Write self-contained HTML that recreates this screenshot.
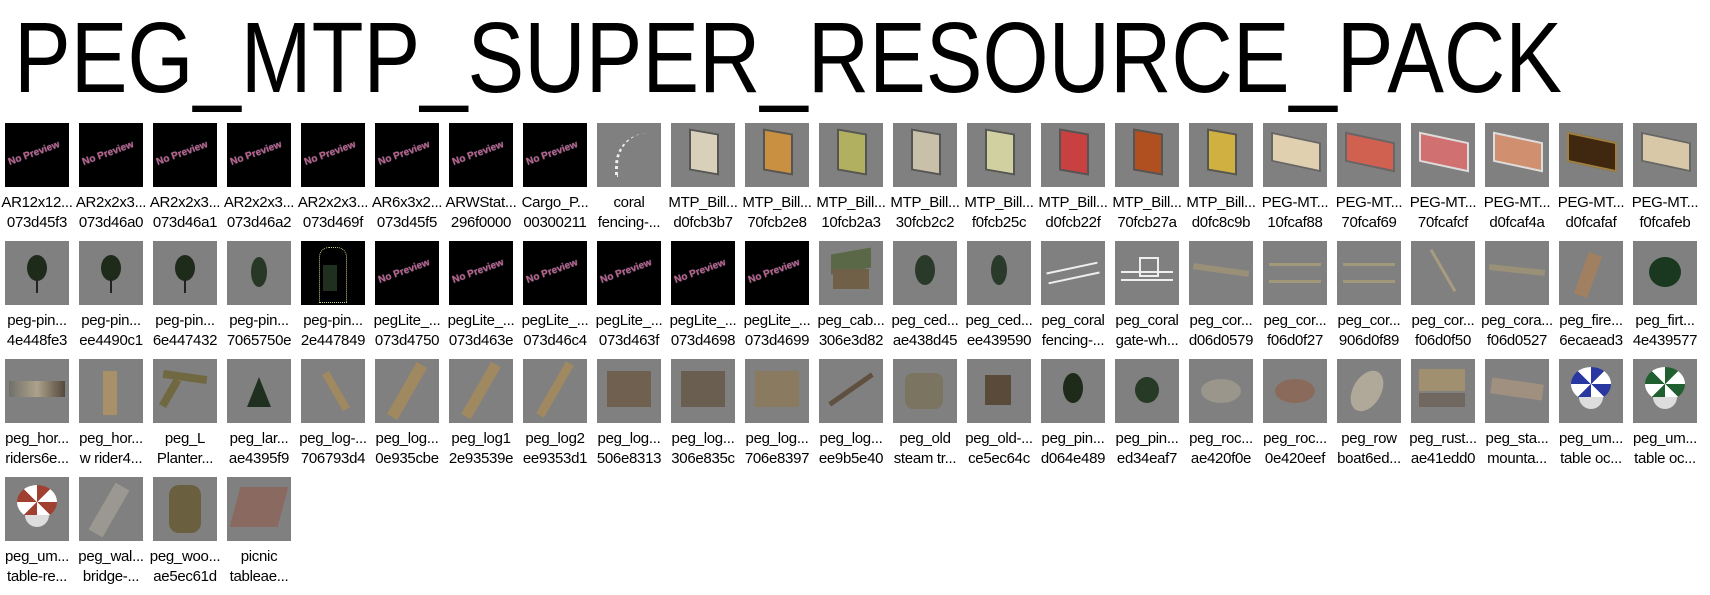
<!DOCTYPE html>
<html><head><meta charset="utf-8"><style>
html,body{margin:0;padding:0;background:#fff;width:1710px;height:589px;overflow:hidden}
h1{position:absolute;left:0;top:0;margin:0}
.g{position:absolute;left:0;top:123px;width:1710px}
.c{position:absolute;width:74px;height:118px}
.t{position:absolute;left:5px;top:0;width:64px;height:64px;background:#808080;overflow:hidden}
.np{background:#000}
.np::after{content:"No Preview";position:absolute;left:2px;top:24px;width:60px;font:bold 10px "Liberation Sans",sans-serif;color:#c06080;transform:rotate(-20deg);text-shadow:0 0 1px #7080c0;white-space:nowrap}
.l{position:absolute;left:-4px;top:70px;width:82px;text-align:center;font:15px/20px "Liberation Sans",sans-serif;color:#000;letter-spacing:-0.3px;white-space:nowrap}
.s{position:absolute}
</style></head><body>
<svg style="position:absolute;left:0;top:0" width="1710" height="120"><text x="14" y="92" font-family="Liberation Sans, sans-serif" font-size="100" textLength="1548" lengthAdjust="spacingAndGlyphs">PEG_MTP_SUPER_RESOURCE_PACK</text></svg>
<div class="g">
<!-- row 1 -->
<div class="c" style="left:0;top:0"><div class="t np"></div><div class="l">AR12x12...<br>073d45f3</div></div>
<div class="c" style="left:74px;top:0"><div class="t np"></div><div class="l">AR2x2x3...<br>073d46a0</div></div>
<div class="c" style="left:148px;top:0"><div class="t np"></div><div class="l">AR2x2x3...<br>073d46a1</div></div>
<div class="c" style="left:222px;top:0"><div class="t np"></div><div class="l">AR2x2x3...<br>073d46a2</div></div>
<div class="c" style="left:296px;top:0"><div class="t np"></div><div class="l">AR2x2x3...<br>073d469f</div></div>
<div class="c" style="left:370px;top:0"><div class="t np"></div><div class="l">AR6x3x2...<br>073d45f5</div></div>
<div class="c" style="left:444px;top:0"><div class="t np"></div><div class="l">ARWStat...<br>296f0000</div></div>
<div class="c" style="left:518px;top:0"><div class="t np"></div><div class="l">Cargo_P...<br>00300211</div></div>
<div class="c" style="left:592px;top:0"><div class="t"><div class="s" style="left:18px;top:10px;width:30px;height:44px;border-left:3px dotted #eee;border-radius:40px 0 0 0"></div></div><div class="l">coral<br>fencing-...</div></div>
<div class="c" style="left:666px;top:0"><div class="t"><div class="s" style="left:18px;top:8px;width:26px;height:38px;background:#d8d0b8;border:2px solid #555;transform:skewY(10deg)"></div></div><div class="l">MTP_Bill...<br>d0fcb3b7</div></div>
<div class="c" style="left:740px;top:0"><div class="t"><div class="s" style="left:18px;top:8px;width:26px;height:38px;background:#c89040;border:2px solid #555;transform:skewY(10deg)"></div></div><div class="l">MTP_Bill...<br>70fcb2e8</div></div>
<div class="c" style="left:814px;top:0"><div class="t"><div class="s" style="left:18px;top:8px;width:26px;height:38px;background:#b0b060;border:2px solid #555;transform:skewY(10deg)"></div></div><div class="l">MTP_Bill...<br>10fcb2a3</div></div>
<div class="c" style="left:888px;top:0"><div class="t"><div class="s" style="left:18px;top:8px;width:26px;height:38px;background:#c8c0a8;border:2px solid #555;transform:skewY(10deg)"></div></div><div class="l">MTP_Bill...<br>30fcb2c2</div></div>
<div class="c" style="left:962px;top:0"><div class="t"><div class="s" style="left:18px;top:8px;width:26px;height:38px;background:#d0d0a0;border:2px solid #555;transform:skewY(10deg)"></div></div><div class="l">MTP_Bill...<br>f0fcb25c</div></div>
<div class="c" style="left:1036px;top:0"><div class="t"><div class="s" style="left:18px;top:8px;width:26px;height:38px;background:#c84040;border:2px solid #555;transform:skewY(10deg)"></div></div><div class="l">MTP_Bill...<br>d0fcb22f</div></div>
<div class="c" style="left:1110px;top:0"><div class="t"><div class="s" style="left:18px;top:8px;width:26px;height:38px;background:#b05020;border:2px solid #555;transform:skewY(10deg)"></div></div><div class="l">MTP_Bill...<br>70fcb27a</div></div>
<div class="c" style="left:1184px;top:0"><div class="t"><div class="s" style="left:18px;top:8px;width:26px;height:38px;background:#d0b040;border:2px solid #555;transform:skewY(10deg)"></div></div><div class="l">MTP_Bill...<br>d0fc8c9b</div></div>
<div class="c" style="left:1258px;top:0"><div class="t"><div class="s" style="left:8px;top:14px;width:46px;height:26px;background:#e0d0b0;border:2px solid #666;transform:skewY(12deg)"></div></div><div class="l">PEG-MT...<br>10fcaf88</div></div>
<div class="c" style="left:1332px;top:0"><div class="t"><div class="s" style="left:8px;top:14px;width:46px;height:26px;background:#d06050;border:2px solid #666;transform:skewY(12deg)"></div></div><div class="l">PEG-MT...<br>70fcaf69</div></div>
<div class="c" style="left:1406px;top:0"><div class="t"><div class="s" style="left:8px;top:14px;width:46px;height:26px;background:#d07070;border:2px solid #ddd;transform:skewY(12deg)"></div></div><div class="l">PEG-MT...<br>70fcafcf</div></div>
<div class="c" style="left:1480px;top:0"><div class="t"><div class="s" style="left:8px;top:14px;width:46px;height:26px;background:#d09070;border:2px solid #ddd;transform:skewY(12deg)"></div></div><div class="l">PEG-MT...<br>d0fcaf4a</div></div>
<div class="c" style="left:1554px;top:0"><div class="t"><div class="s" style="left:8px;top:14px;width:46px;height:26px;background:#402810;border:2px solid #a08040;transform:skewY(12deg)"></div></div><div class="l">PEG-MT...<br>d0fcafaf</div></div>
<div class="c" style="left:1628px;top:0"><div class="t"><div class="s" style="left:8px;top:14px;width:46px;height:26px;background:#d8c8a8;border:2px solid #666;transform:skewY(12deg)"></div></div><div class="l">PEG-MT...<br>f0fcafeb</div></div>
<!-- row 2 -->
<div class="c" style="left:0;top:118px"><div class="t"><div class="s" style="left:22px;top:14px;width:20px;height:26px;background:#1e2a1a;border-radius:50%"></div><div class="s" style="left:31px;top:38px;width:2px;height:14px;background:#222"></div></div><div class="l">peg-pin...<br>4e448fe3</div></div>
<div class="c" style="left:74px;top:118px"><div class="t"><div class="s" style="left:22px;top:14px;width:20px;height:26px;background:#1e2a1a;border-radius:50%"></div><div class="s" style="left:31px;top:38px;width:2px;height:14px;background:#222"></div></div><div class="l">peg-pin...<br>ee4490c1</div></div>
<div class="c" style="left:148px;top:118px"><div class="t"><div class="s" style="left:22px;top:14px;width:20px;height:26px;background:#1e2a1a;border-radius:50%"></div><div class="s" style="left:31px;top:38px;width:2px;height:14px;background:#222"></div></div><div class="l">peg-pin...<br>6e447432</div></div>
<div class="c" style="left:222px;top:118px"><div class="t"><div class="s" style="left:24px;top:16px;width:16px;height:30px;background:#283826;border-radius:50%"></div></div><div class="l">peg-pin...<br>7065750e</div></div>
<div class="c" style="left:296px;top:118px"><div class="t" style="background:#000"><div class="s" style="left:18px;top:6px;width:26px;height:54px;border:1px dotted #cc8;border-radius:10px 10px 0 0"></div><div class="s" style="left:22px;top:24px;width:14px;height:26px;background:#203020"></div></div><div class="l">peg-pin...<br>2e447849</div></div>
<div class="c" style="left:370px;top:118px"><div class="t np"></div><div class="l">pegLite_...<br>073d4750</div></div>
<div class="c" style="left:444px;top:118px"><div class="t np"></div><div class="l">pegLite_...<br>073d463e</div></div>
<div class="c" style="left:518px;top:118px"><div class="t np"></div><div class="l">pegLite_...<br>073d46c4</div></div>
<div class="c" style="left:592px;top:118px"><div class="t np"></div><div class="l">pegLite_...<br>073d463f</div></div>
<div class="c" style="left:666px;top:118px"><div class="t np"></div><div class="l">pegLite_...<br>073d4698</div></div>
<div class="c" style="left:740px;top:118px"><div class="t np"></div><div class="l">pegLite_...<br>073d4699</div></div>
<div class="c" style="left:814px;top:118px"><div class="t"><div class="s" style="left:12px;top:10px;width:40px;height:20px;background:#5a6848;transform:skewY(-10deg)"></div><div class="s" style="left:14px;top:28px;width:36px;height:20px;background:#706048"></div></div><div class="l">peg_cab...<br>306e3d82</div></div>
<div class="c" style="left:888px;top:118px"><div class="t"><div class="s" style="left:22px;top:14px;width:20px;height:30px;background:#2a3a2a;border-radius:50%"></div></div><div class="l">peg_ced...<br>ae438d45</div></div>
<div class="c" style="left:962px;top:118px"><div class="t"><div class="s" style="left:24px;top:14px;width:16px;height:30px;background:#2a3a2a;border-radius:50%"></div></div><div class="l">peg_ced...<br>ee439590</div></div>
<div class="c" style="left:1036px;top:118px"><div class="t"><div class="s" style="left:6px;top:26px;width:52px;height:8px;border-top:2px solid #eee;border-bottom:2px solid #eee;transform:rotate(-12deg)"></div></div><div class="l">peg_coral<br>fencing-...</div></div>
<div class="c" style="left:1110px;top:118px"><div class="t"><div class="s" style="left:6px;top:30px;width:52px;height:6px;border-top:2px solid #eee;border-bottom:2px solid #eee"></div><div class="s" style="left:24px;top:16px;width:16px;height:16px;border:2px solid #eee"></div></div><div class="l">peg_coral<br>gate-wh...</div></div>
<div class="c" style="left:1184px;top:118px"><div class="t"><div class="s" style="left:4px;top:26px;width:56px;height:6px;background:#9a9078;transform:rotate(8deg)"></div></div><div class="l">peg_cor...<br>d06d0579</div></div>
<div class="c" style="left:1258px;top:118px"><div class="t"><div class="s" style="left:6px;top:22px;width:52px;height:14px;border-top:3px solid #a09878;border-bottom:3px solid #a09878"></div></div><div class="l">peg_cor...<br>f06d0f27</div></div>
<div class="c" style="left:1332px;top:118px"><div class="t"><div class="s" style="left:6px;top:22px;width:52px;height:14px;border-top:3px solid #a09878;border-bottom:3px solid #a09878"></div></div><div class="l">peg_cor...<br>906d0f89</div></div>
<div class="c" style="left:1406px;top:118px"><div class="t"><div class="s" style="left:8px;top:28px;width:48px;height:3px;background:#a89c80;transform:rotate(60deg)"></div></div><div class="l">peg_cor...<br>f06d0f50</div></div>
<div class="c" style="left:1480px;top:118px"><div class="t"><div class="s" style="left:4px;top:26px;width:56px;height:6px;background:#9a9078;transform:rotate(6deg)"></div></div><div class="l">peg_cora...<br>f06d0527</div></div>
<div class="c" style="left:1554px;top:118px"><div class="t"><div class="s" style="left:22px;top:12px;width:14px;height:44px;background:#a08060;transform:rotate(20deg)"></div></div><div class="l">peg_fire...<br>6ecaead3</div></div>
<div class="c" style="left:1628px;top:118px"><div class="t"><div class="s" style="left:16px;top:16px;width:32px;height:30px;background:#1a3820;border-radius:50%"></div></div><div class="l">peg_firt...<br>4e439577</div></div>
<!-- row 3 -->
<div class="c" style="left:0;top:236px"><div class="t"><div class="s" style="left:4px;top:22px;width:56px;height:16px;background:linear-gradient(90deg,#6a6a60,#c0b090,#403020);opacity:.7"></div></div><div class="l">peg_hor...<br>riders6e...</div></div>
<div class="c" style="left:74px;top:236px"><div class="t"><div class="s" style="left:24px;top:12px;width:14px;height:44px;background:#a89068"></div></div><div class="l">peg_hor...<br>w rider4...</div></div>
<div class="c" style="left:148px;top:236px"><div class="t"><div class="s" style="left:10px;top:14px;width:44px;height:8px;background:#706840;transform:rotate(8deg)"></div><div class="s" style="left:2px;top:30px;width:30px;height:8px;background:#706840;transform:rotate(-60deg)"></div></div><div class="l">peg_L<br>Planter...</div></div>
<div class="c" style="left:222px;top:236px"><div class="t"><div class="s" style="left:20px;top:18px;width:24px;height:30px;background:#203020;clip-path:polygon(50% 0,100% 100%,0 100%)"></div></div><div class="l">peg_lar...<br>ae4395f9</div></div>
<div class="c" style="left:296px;top:236px"><div class="t"><div class="s" style="left:14px;top:28px;width:42px;height:8px;background:#a08860;transform:rotate(60deg)"></div></div><div class="l">peg_log-...<br>706793d4</div></div>
<div class="c" style="left:370px;top:236px"><div class="t"><div class="s" style="left:2px;top:26px;width:60px;height:12px;background:#a08860;transform:rotate(-60deg)"></div></div><div class="l">peg_log...<br>0e935cbe</div></div>
<div class="c" style="left:444px;top:236px"><div class="t"><div class="s" style="left:2px;top:26px;width:60px;height:11px;background:#a08860;transform:rotate(-60deg)"></div></div><div class="l">peg_log1<br>2e93539e</div></div>
<div class="c" style="left:518px;top:236px"><div class="t"><div class="s" style="left:2px;top:26px;width:60px;height:9px;background:#a08860;transform:rotate(-60deg)"></div></div><div class="l">peg_log2<br>ee9353d1</div></div>
<div class="c" style="left:592px;top:236px"><div class="t"><div class="s" style="left:10px;top:12px;width:44px;height:36px;background:#706050"></div></div><div class="l">peg_log...<br>506e8313</div></div>
<div class="c" style="left:666px;top:236px"><div class="t"><div class="s" style="left:10px;top:12px;width:44px;height:36px;background:#6a5e50"></div></div><div class="l">peg_log...<br>306e835c</div></div>
<div class="c" style="left:740px;top:236px"><div class="t"><div class="s" style="left:10px;top:12px;width:44px;height:36px;background:#8a7a60"></div></div><div class="l">peg_log...<br>706e8397</div></div>
<div class="c" style="left:814px;top:236px"><div class="t"><div class="s" style="left:6px;top:28px;width:52px;height:5px;background:#605040;transform:rotate(-35deg)"></div></div><div class="l">peg_log...<br>ee9b5e40</div></div>
<div class="c" style="left:888px;top:236px"><div class="t"><div class="s" style="left:12px;top:14px;width:38px;height:36px;background:#7a7460;border-radius:8px"></div></div><div class="l">peg_old<br>steam tr...</div></div>
<div class="c" style="left:962px;top:236px"><div class="t"><div class="s" style="left:18px;top:16px;width:26px;height:30px;background:#5a4a3a"></div></div><div class="l">peg_old-...<br>ce5ec64c</div></div>
<div class="c" style="left:1036px;top:236px"><div class="t"><div class="s" style="left:22px;top:14px;width:20px;height:30px;background:#1e2a1a;border-radius:50%"></div></div><div class="l">peg_pin...<br>d064e489</div></div>
<div class="c" style="left:1110px;top:236px"><div class="t"><div class="s" style="left:20px;top:18px;width:24px;height:26px;background:#263a26;border-radius:50%"></div></div><div class="l">peg_pin...<br>ed34eaf7</div></div>
<div class="c" style="left:1184px;top:236px"><div class="t"><div class="s" style="left:12px;top:20px;width:40px;height:24px;background:#9a968c;border-radius:50%"></div></div><div class="l">peg_roc...<br>ae420f0e</div></div>
<div class="c" style="left:1258px;top:236px"><div class="t"><div class="s" style="left:12px;top:20px;width:40px;height:24px;background:#8a6a5a;border-radius:50%"></div></div><div class="l">peg_roc...<br>0e420eef</div></div>
<div class="c" style="left:1332px;top:236px"><div class="t"><div class="s" style="left:16px;top:10px;width:28px;height:44px;background:#b0a898;border-radius:50%;transform:rotate(30deg)"></div></div><div class="l">peg_row<br>boat6ed...</div></div>
<div class="c" style="left:1406px;top:236px"><div class="t"><div class="s" style="left:8px;top:10px;width:46px;height:22px;background:#a09070"></div><div class="s" style="left:8px;top:34px;width:46px;height:14px;background:#706860"></div></div><div class="l">peg_rust...<br>ae41edd0</div></div>
<div class="c" style="left:1480px;top:236px"><div class="t"><div class="s" style="left:6px;top:22px;width:52px;height:16px;background:#a09080;transform:rotate(8deg)"></div></div><div class="l">peg_sta...<br>mounta...</div></div>
<div class="c" style="left:1554px;top:236px"><div class="t"><div class="s" style="left:12px;top:8px;width:40px;height:34px;background:conic-gradient(#2838a0 0 12.5%,#fff 0 25%,#2838a0 0 37.5%,#fff 0 50%,#2838a0 0 62.5%,#fff 0 75%,#2838a0 0 87.5%,#fff 0);border-radius:50%"></div><div class="s" style="left:20px;top:38px;width:24px;height:12px;background:#ddd;border-radius:0 0 12px 12px"></div></div><div class="l">peg_um...<br>table oc...</div></div>
<div class="c" style="left:1628px;top:236px"><div class="t"><div class="s" style="left:12px;top:8px;width:40px;height:34px;background:conic-gradient(#206030 0 12.5%,#fff 0 25%,#206030 0 37.5%,#fff 0 50%,#206030 0 62.5%,#fff 0 75%,#206030 0 87.5%,#fff 0);border-radius:50%"></div><div class="s" style="left:20px;top:38px;width:24px;height:12px;background:#ddd;border-radius:0 0 12px 12px"></div></div><div class="l">peg_um...<br>table oc...</div></div>
<!-- row 4 -->
<div class="c" style="left:0;top:354px"><div class="t"><div class="s" style="left:12px;top:8px;width:40px;height:34px;background:conic-gradient(#a04030 0 12.5%,#fff 0 25%,#a04030 0 37.5%,#fff 0 50%,#a04030 0 62.5%,#fff 0 75%,#a04030 0 87.5%,#fff 0);border-radius:50%"></div><div class="s" style="left:20px;top:38px;width:24px;height:12px;background:#ddd;border-radius:0 0 12px 12px"></div></div><div class="l">peg_um...<br>table-re...</div></div>
<div class="c" style="left:74px;top:354px"><div class="t"><div class="s" style="left:22px;top:6px;width:16px;height:54px;background:#9a9890;transform:rotate(30deg)"></div></div><div class="l">peg_wal...<br>bridge-...</div></div>
<div class="c" style="left:148px;top:354px"><div class="t"><div class="s" style="left:16px;top:8px;width:32px;height:48px;background:#6a6040;border-radius:10px"></div></div><div class="l">peg_woo...<br>ae5ec61d</div></div>
<div class="c" style="left:222px;top:354px"><div class="t"><div class="s" style="left:8px;top:10px;width:48px;height:40px;background:#8a6a60;transform:skewX(-15deg)"></div></div><div class="l">picnic<br>tableae...</div></div>
</div>
</body></html>
